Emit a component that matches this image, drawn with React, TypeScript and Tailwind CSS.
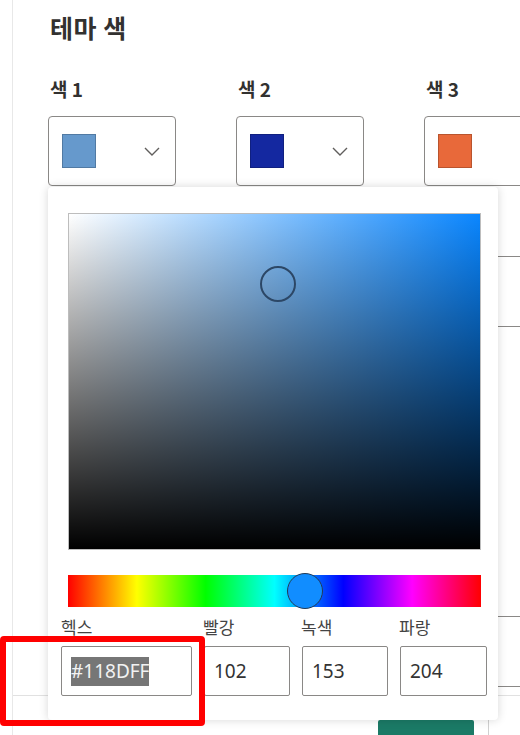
import React from "react";

const Chevron = () => (
  <svg width="16" height="9" viewBox="0 0 16 9" fill="none">
    <path d="M1 1 L8 8 L15 1" stroke="#605e5c" strokeWidth="1.4" />
  </svg>
);

const Field = ({ label, color }: { label: string; color: string }) => (
  <div className="flex flex-col">
    <div className="ml-[2px] h-[22px] text-[19px] font-semibold leading-[22px] text-[#323130]">{label}</div>
    <div className="mt-[16px] flex h-[70px] w-[128px] items-center justify-between rounded-[4px] border border-[#8a8886] bg-white pl-[13px] pr-[15px]">
      <div className="h-[34px] w-[34px] border border-black/20" style={{ backgroundColor: color }} />
      <Chevron />
    </div>
  </div>
);

const Box = () => (
  <div className="flex h-[71px] w-[128px] items-center justify-end rounded-[4px] border border-[#8a8886] bg-white pr-[15px]">
    <Chevron />
  </div>
);

export default function App() {
  return (
    <div className="relative h-[735px] w-[520px] overflow-hidden bg-white font-['Noto_Sans_CJK_KR','Noto_Sans',sans-serif] text-[#323130]">
      <div className="ml-[12px] h-full border-l border-[#e8e8e8] pl-[35px] pt-[10px]">
        <div className="ml-[2px] h-[34px] text-[25px] font-semibold leading-[34px] tracking-[0.5px] text-[#323130]">테마 색</div>
        <div className="mt-[34px] grid w-[560px] grid-cols-[128px_128px_128px] gap-x-[60px]">
          <Field label="색 1" color="#6699cc" />
          <Field label="색 2" color="#1428a0" />
          <Field label="색 3" color="#e8693a" />
        </div>
        <div className="mt-[70px] grid w-[560px] grid-cols-[128px_128px_128px] gap-x-[60px]">
          <Box />
          <Box />
          <Box />
        </div>
        <div className="mt-[289px] grid w-[560px] grid-cols-[128px_128px_128px] gap-x-[60px]">
          <Box />
          <Box />
          <Box />
        </div>
        <div className="-ml-[35px] mt-[8px] border-t border-[#e1e1e1]" />
        <div className="mt-[24px] flex">
          <div className="ml-[330px] h-[20px] w-[96px] rounded-t-[2px] bg-[#1b7a66]" />
          <div className="ml-[14px] h-[20px] border-l border-[#d0d0d0]" />
        </div>
      </div>

      {/* color picker popover */}
      <div className="absolute left-[48px] top-[187px] h-[533px] w-[450px] rounded-[4px] bg-white shadow-[0_0_10px_rgba(0,0,0,0.16)]">
        <div className="relative ml-[20px] mt-[26px] h-[337px] w-[413px] border border-[#bdbdbd] bg-[linear-gradient(to_top,#000,rgba(0,0,0,0)),linear-gradient(to_right,#fff,#0a86ff)]">
          <div className="absolute left-[191px] top-[52px] h-[36px] w-[36px] rounded-full border-2 border-[#2c4766]" />
        </div>
        <div className="relative ml-[20px] mt-[25px] h-[32px] w-[413px] bg-[linear-gradient(to_right,#f00,#ff0,#0f0,#0ff,#00f,#f0f,#f00)]">
          <div className="absolute left-[219px] top-[-2px] h-[36px] w-[36px] rounded-full border-[1.5px] border-[#233a55] bg-[#118dff]" />
        </div>
        <div className="ml-[13px] mt-[9px] flex gap-[12px]">
          <div className="flex w-[131px] flex-col">
            <div className="h-[22px] text-[17px] leading-[22px] text-[#444]">헥스</div>
            <div className="mt-[8px] flex h-[50px] items-center rounded-[2px] border border-[#8a8886] pl-[9px]">
              <span className="bg-[#767676] font-['Noto_Sans',sans-serif] text-[19px] leading-[29px] text-[#f2f2f2]">#118DFF</span>
            </div>
          </div>
          <div className="flex w-[86px] flex-col">
            <div className="-ml-[1px] h-[22px] text-[17px] leading-[22px] text-[#444]">빨강</div>
            <div className="mt-[8px] flex h-[50px] items-center rounded-[2px] border border-[#8a8886] pl-[9px] font-['Noto_Sans',sans-serif] text-[19px] text-[#333]">102</div>
          </div>
          <div className="flex w-[86px] flex-col">
            <div className="-ml-[1px] h-[22px] text-[17px] leading-[22px] text-[#444]">녹색</div>
            <div className="mt-[8px] flex h-[50px] items-center rounded-[2px] border border-[#8a8886] pl-[9px] font-['Noto_Sans',sans-serif] text-[19px] text-[#333]">153</div>
          </div>
          <div className="flex w-[87px] flex-col">
            <div className="-ml-[1px] h-[22px] text-[17px] leading-[22px] text-[#444]">파랑</div>
            <div className="mt-[8px] flex h-[50px] items-center rounded-[2px] border border-[#8a8886] pl-[9px] font-['Noto_Sans',sans-serif] text-[19px] text-[#333]">204</div>
          </div>
        </div>
      </div>

      {/* annotation */}
      <div className="absolute left-0 top-[636px] h-[90px] w-[205px] rounded-[4px] border-[6px] border-[#ff0000]" />
    </div>
  );
}
